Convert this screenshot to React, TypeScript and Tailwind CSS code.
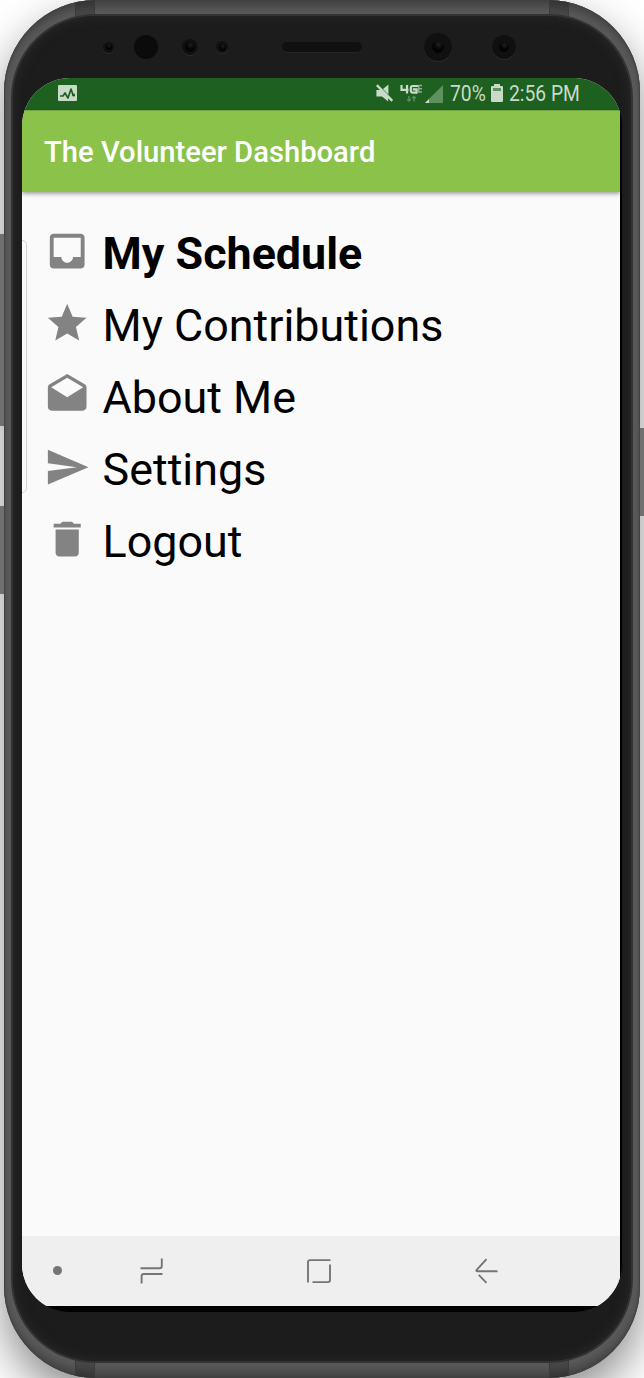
import type { ReactNode } from "react";

const items = [
  { label: "My Schedule", bold: true, d: "M19 3H4.99c-1.11 0-1.98.89-1.98 2L3 19c0 1.1.88 2 1.99 2H19c1.1 0 2-.9 2-2V5c0-1.11-.9-2-2-2zm0 12h-4c0 1.66-1.35 3-3 3s-3-1.34-3-3H4.99V5H19v10z" },
  { label: "My Contributions", d: "M12 17.27L18.18 21l-1.64-7.03L22 9.24l-7.19-.61L12 2 9.19 8.63 2 9.24l5.46 4.73L5.82 21z" },
  { label: "About Me", d: "M21.99 8c0-.72-.37-1.35-.94-1.7L12 1 2.95 6.3C2.38 6.65 2 7.28 2 8v10c0 1.1.9 2 2 2h16c1.1 0 2-.9 2-2l-.01-10zM12 13L3.74 7.84 12 3l8.26 4.84L12 13z" },
  { label: "Settings", d: "M2.01 21L23 12 2.01 3 2 10l15 2-15 2z" },
  { label: "Logout", d: "M6 19c0 1.1.9 2 2 2h8c1.1 0 2-.9 2-2V7H6v12zM19 4h-3.5l-1-1h-5l-1 1H5v2h14V4z" },
];

function Lens({ size, glass }: { size: string; glass: string }) {
  return (
    <span className={`flex items-center justify-center rounded-full bg-[#101010] shadow-[0_1px_0_#2c2c2c] ${size}`}>
      <span className={`rounded-full bg-[radial-gradient(circle_at_55%_30%,#202020_0%,#050505_45%,#000_100%)] ${glass}`} />
    </span>
  );
}

function Sensors() {
  return (
    <div className="flex h-[32px] w-full items-center pl-[81px]">
      <Lens size="size-[11px]" glass="size-[6px]" />
      <span className="ml-[20px] size-[24px] rounded-full bg-[#0b0b0b]" />
      <span className="ml-[24px]"><Lens size="size-[16px]" glass="size-[10px]" /></span>
      <span className="ml-[18px]"><Lens size="size-[12px]" glass="size-[7px]" /></span>
      <span className="ml-[54px] h-[10px] w-[80px] rounded-full bg-[#101010] shadow-[0_1px_0_#262626]" />
      <span className="ml-[62px]"><Lens size="size-[28px]" glass="size-[12px]" /></span>
      <span className="ml-[40px]"><Lens size="size-[24px]" glass="size-[10px]" /></span>
    </div>
  );
}

function Condensed({ width, children }: { width: string; children: ReactNode }) {
  return (
    <span className={`block shrink-0 ${width}`}>
      <span className="block w-max origin-left scale-x-[0.875] text-[22px] leading-[32px]">{children}</span>
    </span>
  );
}

function StatusBar() {
  return (
    <div className="flex h-[32px] items-center bg-[#1d6020] pl-[36px] text-[#c9dac9]">
      <svg className="-mt-[2px] h-[16px] w-[19px] shrink-0" viewBox="0 0 19 16">
        <rect width="19" height="16" rx="1" fill="currentColor" />
        <path d="M2 11h3l2-3 3 5 3-9 2 6" fill="none" stroke="#1d6020" strokeWidth="1.7" strokeLinejoin="round" />
        <circle cx="15.6" cy="10" r="1.6" fill="#1d6020" />
      </svg>
      <svg className="-mt-[2px] ml-[299px] h-[18px] w-[17px] shrink-0" viewBox="0 0 17 18">
        <path d="M.4 6h4.4L12.2 13.2V17.4L6 12.5H.4zM7 5L12.4.4v10z" fill="currentColor" />
        <path d="M.8 1.2L16.3 16.8" stroke="currentColor" strokeWidth="2.4" />
      </svg>
      <svg className="-mt-[2px] ml-[7px] h-[18px] w-[23px] shrink-0" viewBox="0 0 23 18">
        <g fill="none" stroke="currentColor" strokeWidth="2.2">
          <path d="M1.5 1v4.9H8.5M7 1v8.6M18 2h-5.2q-2 0-2 2v2.6q0 2 2 2H16.6V5.3h-3.8" />
        </g>
        <path d="M18.5 1.6H22M18.5 4.8H22M18.5 8H22M18.7 1v7.6" stroke="#8eae8f" strokeWidth="1.5" />
        <path d="M9 12v5M7.2 15.2L9 17l1.8-1.8M14 17.5v-5M12.2 14.3L14 12.5l1.8 1.8" stroke="#5a8f5c" fill="none" strokeWidth="1.5" />
      </svg>
      <svg className="-mt-[1px] ml-[2px] h-[18px] w-[18px] shrink-0" viewBox="0 0 18 18">
        <path d="M0 18L18 0v18z" fill="#5f915f" />
        <path d="M0 18l4-4v4z" fill="currentColor" />
      </svg>
      <span className="ml-[7px]"><Condensed width="w-[41px]">70%</Condensed></span>
      <svg className="-mt-[2px] h-[18px] w-[12px] shrink-0" viewBox="0 0 12 18">
        <path d="M3 0h6v2h2q1 0 1 1v14q0 1-1 1H1q-1 0-1-1V3q0-1 1-1h2z" fill="currentColor" />
        <path d="M2 4h8v3H2z" fill="#5f915f" />
      </svg>
      <span className="ml-[6px]"><Condensed width="w-[72px]">2:56 PM</Condensed></span>
    </div>
  );
}

function NavBar() {
  return (
    <div className="flex h-[70px] items-center bg-[#efefef] pb-[1px] pl-[31px]">
      <span className="size-[9px] rounded-full bg-[#757575]" />
      <svg className="ml-[78px] h-[26px] w-[24px]" viewBox="0 0 24 26" fill="none" stroke="#757575" strokeWidth="1.9">
        <path d="M.5 10.2h19q2.3 0 2.3-2.3V.6M22.5 16H3.9q-2.3 0-2.3 2.3v7.3" />
      </svg>
      <svg className="ml-[142px] h-[26px] w-[26px]" viewBox="0 0 26 26" fill="none" stroke="#757575" strokeWidth="1.9">
        <path d="M2 24.6V4.1q0-2 2-2H24.5M24 6.6v15.5q0 2-2 2H6.5" />
      </svg>
      <svg className="ml-[143px] h-[26px] w-[24px]" viewBox="0 0 24 26" fill="none" stroke="#757575" strokeWidth="1.9">
        <path d="M22.5 13.2H2.7q-2.2 0-.8-1.5L11.5 1.1M3.7 16.8l7.8 8" />
      </svg>
    </div>
  );
}

export default function App() {
  return (
    <div className="relative h-[1378px] w-[644px] overflow-hidden bg-white font-['Roboto',sans-serif]">
      <div className="relative mx-[4px] h-[1378px] rounded-[92px] bg-[#5a5a5a] shadow-[0_20px_45px_rgba(0,0,0,0.45),inset_1px_0_1px_#404040,inset_-1px_0_1px_#404040,inset_0_10px_10px_-4px_#404040,inset_0_-10px_10px_-4px_#404040]">
        <div className="absolute inset-0 overflow-hidden rounded-[92px]">
          <span className="absolute top-0 left-[71px] h-[18px] w-[20px] border-x border-[#3b3b3b] bg-black/20" />
          <span className="absolute top-0 left-[545px] h-[18px] w-[20px] border-x border-[#3b3b3b] bg-black/20" />
          <span className="absolute bottom-0 left-[71px] h-[18px] w-[20px] border-x border-[#3b3b3b] bg-black/20" />
          <span className="absolute bottom-0 left-[545px] h-[18px] w-[20px] border-x border-[#3b3b3b] bg-black/20" />
        </div>
        <div className="relative flex h-full flex-col px-[7px] pt-[14px] pb-[15px]">
          <div className="flex h-full flex-col rounded-[84px] border-2 border-[#333333] bg-[#1c1c1c] px-[9px] pt-[15px] shadow-[inset_0_0_12px_#2b2b2b]">
            <Sensors />
            <div className="mt-[15px] h-[1234px] w-[600px] overflow-hidden rounded-[48px] bg-black">
              <div className="relative flex h-[1228px] w-[598px] flex-col bg-[#fafafa]">
                <StatusBar />
                <header className="z-10 flex h-[82px] items-center border-t border-[#73a63d] bg-[#8bc34a] pl-[22px] shadow-[0_2px_4px_rgba(0,0,0,0.35)]">
                  <h1 className="pt-[1px] text-[29.2px] leading-[36px] font-medium text-white">The Volunteer Dashboard</h1>
                </header>
                <nav className="flex grow flex-col pt-[25px] pl-[22.4px]">
                  {items.map((item) => (
                    <a key={item.label} className="flex h-[72px] items-center text-black">
                      <svg className="-mt-[4px] size-[46.4px] shrink-0" viewBox="0 0 24 24" fill="#838383"><path d={item.d} /></svg>
                      <span className={`ml-[11.8px] pt-[1px] text-[44.85px] leading-[72px] whitespace-nowrap ${item.bold ? "font-bold" : "font-normal"}`}>{item.label}</span>
                    </a>
                  ))}
                </nav>
                <NavBar />
                <span className="absolute top-[162px] left-0 h-[253px] w-[5px] rounded-r-[5px] border border-l-0 border-[#d2d2d2]" />
              </div>
            </div>
          </div>
        </div>
      </div>
      <span className="absolute top-[234px] left-0 h-[192px] w-[5px] rounded-r-[2px] border-r border-[#444] bg-[#707070]" />
      <span className="absolute top-[506px] left-0 h-[88px] w-[5px] rounded-r-[2px] border-r border-[#444] bg-[#707070]" />
      <span className="absolute top-[428px] right-0 h-[88px] w-[5px] rounded-l-[2px] border-l border-[#444] bg-[#707070]" />
    </div>
  );
}
